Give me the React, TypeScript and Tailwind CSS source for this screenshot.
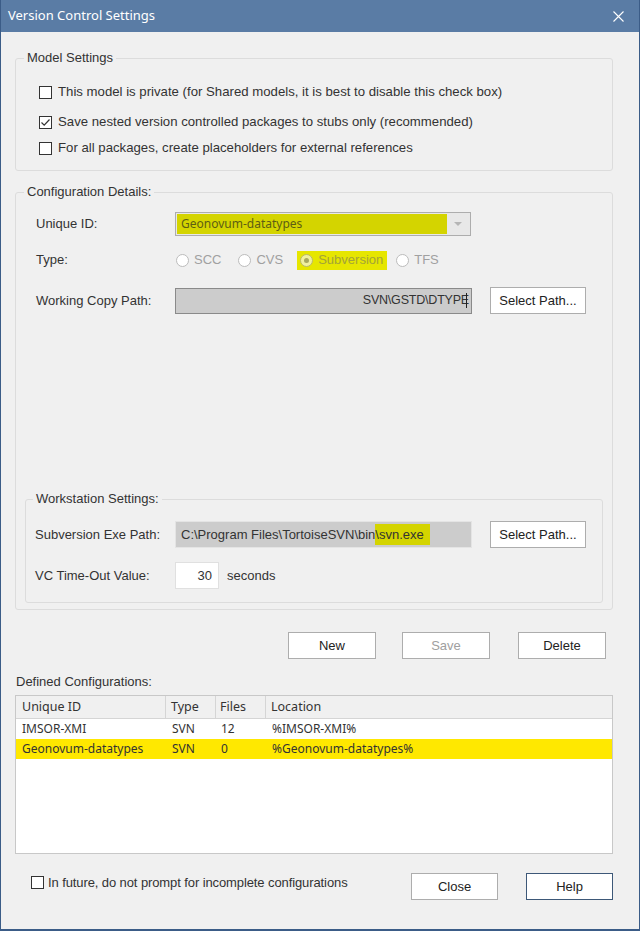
import React from "react";

const ui = { fontFamily: '"Liberation Sans", Arial, sans-serif' };
const seg = { fontFamily: '"Noto Sans", "Open Sans", sans-serif' };

function CheckBox({ checked }: { checked?: boolean }) {
  return (
    <span className="w-[13px] h-[13px] border border-[#333333] bg-white flex items-center justify-center shrink-0">
      {checked && (
        <svg width="11" height="11" viewBox="0 0 11 11">
          <path d="M1.5 5.5 L4.2 8.2 L9.5 2.5" fill="none" stroke="#333" strokeWidth="1.2" />
        </svg>
      )}
    </span>
  );
}

function Radio({ on, label, hl }: { on?: boolean; label: string; hl?: boolean }) {
  return (
    <span className="flex items-center">
      <span
        className={
          "w-[13px] h-[13px] rounded-full border flex items-center justify-center " +
          (hl ? "border-[#b8b86a] bg-[#f0f0a0]" : "border-[#bcbcbc] bg-white")
        }
      >
        {on && <span className="w-[5px] h-[5px] rounded-full bg-[#a8a860]" />}
      </span>
      <span className={"ml-[5px] text-[13px] " + (hl ? "text-[#a3a338]" : "text-[#a0a0a0]")}>{label}</span>
    </span>
  );
}

function Btn({ children, w, dim, def }: { children: React.ReactNode; w: string; dim?: boolean; def?: boolean }) {
  return (
    <button
      className={
        "h-[27px] border bg-white text-[13px] flex items-center justify-center " +
        w +
        (def ? " border-[#3d5878]" : " border-[#adadad]") +
        (dim ? " text-[#a0a0a0]" : " text-[#222]")
      }
      style={ui}
    >
      {children}
    </button>
  );
}

export default function App() {
  return (
    <div
      className="w-[640px] h-[931px] flex flex-col bg-[#f0f0f0] border-x border-b-2 border-[#3b5c87] text-[#222]"
      style={ui}
    >
      {/* Title bar */}
      <div className="h-[32px] bg-[#5a7ca5] flex items-center justify-between pl-[7px] pr-[15px] shrink-0">
        <span className="text-white text-[13px]" style={seg}>
          Version Control Settings
        </span>
        <svg width="11" height="11" viewBox="0 0 11 11">
          <path d="M0.5 0.5 L10.5 10.5 M10.5 0.5 L0.5 10.5" stroke="white" strokeWidth="1.1" />
        </svg>
      </div>

      <div className="flex flex-col pl-[14px] pr-[26px]">
        {/* Model Settings */}
        <fieldset className="mt-[18px] border border-[#dcdcdc] rounded-[3px] pb-[12px]">
          <legend className="ml-[8px] px-[3px] text-[13px] leading-[16px] text-[#333]">Model Settings</legend>
          <div className="pl-[23px] flex flex-col text-[13.2px] text-[#333]">
            <label className="mt-[16px] h-[20px] flex items-center">
              <CheckBox />
              <span className="ml-[6px]">This model is private (for Shared models, it is best to disable this check box)</span>
            </label>
            <label className="mt-[10px] h-[20px] flex items-center">
              <CheckBox checked />
              <span className="ml-[6px]">Save nested version controlled packages to stubs only (recommended)</span>
            </label>
            <label className="mt-[6px] h-[20px] flex items-center">
              <CheckBox />
              <span className="ml-[6px]">For all packages, create placeholders for external references</span>
            </label>
          </div>
        </fieldset>

        {/* Configuration Details */}
        <fieldset className="mt-[13px] border border-[#dcdcdc] rounded-[3px] pb-[6px]">
          <legend className="ml-[8px] px-[3px] text-[13px] leading-[16px] text-[#333]">Configuration Details:</legend>
          <div className="px-[9px] flex flex-col">
            <div className="pl-[11px] mt-[12px] flex items-center">
              <span className="w-[139px] text-[13px] text-[#333]">Unique ID:</span>
              <div className="w-[296px] h-[24px] border border-[#adadad] bg-[#e8e8e8] flex items-center p-[1px]">
                <div className="w-[270px] h-full bg-[#d4d400] flex items-center pl-[4px] text-[12px] text-[#5e5e14]" style={seg}>
                  Geonovum-datatypes
                </div>
                <svg className="ml-[7px]" width="8" height="5" viewBox="0 0 8 5">
                  <path d="M0 0 L8 0 L4 4 Z" fill="#b5b5b5" />
                </svg>
              </div>
            </div>

            <div className="pl-[11px] mt-[14px] h-[20px] flex items-center">
              <span className="w-[140px] text-[13px] text-[#333]">Type:</span>
              <Radio label="SCC" />
              <span className="ml-[17px]">
                <Radio label="CVS" />
              </span>
              <span className="ml-[14px] bg-[#e6e600] h-[19px] pl-[3px] pr-[4px] flex items-center">
                <Radio label="Subversion" on hl />
              </span>
              <span className="ml-[9px]">
                <Radio label="TFS" />
              </span>
            </div>

            <div className="pl-[11px] mt-[17px] flex items-center">
              <span className="w-[139px] text-[13px] text-[#333]">Working Copy Path:</span>
              <div className="w-[297px] h-[26px] border border-[#8a8a8a] bg-[#cccccc] flex items-center justify-end pr-[4px] text-[12.5px] tracking-[-0.2px] text-[#333]">
                SVN\GSTD\DTYPE
                <span className="w-[1px] h-[15px] bg-[#222] -ml-[3px]" />
              </div>
              <div className="ml-[18px]">
                <Btn w="w-[96px]">Select Path...</Btn>
              </div>
            </div>

            <div className="h-[177px]" />

            {/* Workstation Settings */}
            <fieldset className="border border-[#dcdcdc] rounded-[3px] pb-[13px]">
              <legend className="ml-[7px] px-[3px] text-[13px] leading-[16px] text-[#333]">Workstation Settings:</legend>
              <div className="pl-[9px] flex flex-col">
                <div className="mt-[14px] flex items-center">
                  <span className="w-[140px] text-[13px] text-[#333]">Subversion Exe Path:</span>
                  <div className="w-[297px] h-[27px] border border-[#e4e4e4] bg-[#cccccc] flex items-center pl-[5px] text-[13px] text-[#333]">
                    C:\Program Files\TortoiseSVN\bin
                    <span className="bg-[#d4d400] h-[21px] flex items-center pr-[6px]">\svn.exe</span>
                  </div>
                  <div className="ml-[18px]">
                    <Btn w="w-[96px]">Select Path...</Btn>
                  </div>
                </div>
                <div className="mt-[14px] flex items-center">
                  <span className="w-[140px] text-[13px] text-[#333]">VC Time-Out Value:</span>
                  <div className="w-[44px] h-[27px] border border-[#e0e0e0] bg-white flex items-center justify-end pr-[6px] text-[13px] text-[#333]">
                    30
                  </div>
                  <span className="ml-[8px] text-[13px] text-[#333]">seconds</span>
                </div>
              </div>
            </fieldset>
          </div>
        </fieldset>

        {/* Action buttons */}
        <div className="mt-[22px] flex justify-end pr-[7px]">
          <Btn w="w-[88px]">New</Btn>
          <div className="ml-[26px]">
            <Btn w="w-[88px]" dim>
              Save
            </Btn>
          </div>
          <div className="ml-[28px]">
            <Btn w="w-[88px]">Delete</Btn>
          </div>
        </div>

        {/* Defined Configurations */}
        <div className="mt-[15px] pl-[1px] h-[16px] flex items-center text-[13px] text-[#333]">Defined Configurations:</div>
        <div className="mt-[5px] h-[159px] border border-[#c8c8c8] bg-white flex flex-col text-[12px] text-[#333]" style={seg}>
          <div className="h-[23px] bg-[#f0f0f0] flex border-b border-[#d5d5d5] text-[12.5px]">
            <div className="w-[150px] pl-[6px] flex items-center border-r border-[#d5d5d5]">Unique ID</div>
            <div className="w-[50px] pl-[5px] flex items-center border-r border-[#d5d5d5]">Type</div>
            <div className="w-[50px] pl-[4px] flex items-center border-r border-[#d5d5d5]">Files</div>
            <div className="flex-1 pl-[5px] flex items-center">Location</div>
          </div>
          <div className="h-[20px] flex items-center">
            <div className="w-[150px] pl-[6px]">IMSOR-XMI</div>
            <div className="w-[50px] pl-[6px]">SVN</div>
            <div className="w-[50px] pl-[5px]">12</div>
            <div className="flex-1 pl-[6px]">%IMSOR-XMI%</div>
          </div>
          <div className="h-[20px] flex items-center bg-[#ffe800]">
            <div className="w-[150px] pl-[6px]">Geonovum-datatypes</div>
            <div className="w-[50px] pl-[6px]">SVN</div>
            <div className="w-[50px] pl-[5px]">0</div>
            <div className="flex-1 pl-[6px]">%Geonovum-datatypes%</div>
          </div>
        </div>

        {/* Footer */}
        <div className="mt-[19px] flex items-center">
          <label className="ml-[16px] flex items-center self-start text-[13px] tracking-[-0.1px] text-[#333]">
            <CheckBox />
            <span className="ml-[4px]">In future, do not prompt for incomplete configurations</span>
          </label>
          <div className="ml-auto">
            <Btn w="w-[87px]">Close</Btn>
          </div>
          <div className="ml-[28px]">
            <Btn w="w-[87px]" def>
              Help
            </Btn>
          </div>
        </div>
      </div>
    </div>
  );
}
